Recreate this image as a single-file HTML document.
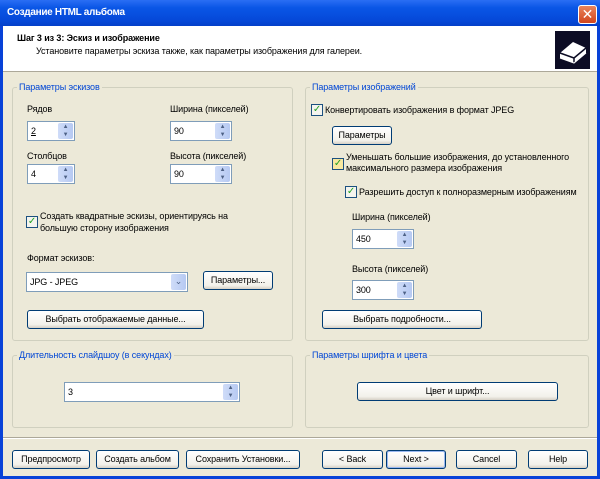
<!DOCTYPE html>
<html><head><meta charset="utf-8"><style>
*{margin:0;padding:0;box-sizing:border-box}
body{width:600px;height:479px;overflow:hidden;background:#0842d8;font-family:"Liberation Sans","DejaVu Sans",sans-serif;font-size:9px;letter-spacing:-0.1px;color:#000;position:relative}
.a{position:absolute}
#title{left:0;top:0;width:600px;height:26px;background:linear-gradient(#2a6ef4,#0a56e6 30%,#0548d8 80%,#0440c8);}
#title span{position:absolute;left:7px;top:7px;color:#fff;font-weight:bold;font-size:10px;letter-spacing:-0.3px}
#close{left:578px;top:5px;width:19px;height:19px;border:1px solid #fff;border-radius:3px;background:linear-gradient(#e8845c,#d2461e);color:#fff;font-weight:bold;font-size:14px;text-align:center;line-height:16px}
#client{left:3px;top:26px;width:594px;height:450px;background:#ece9d8}
#head{left:3px;top:26px;width:594px;height:46px;background:#fff;border-bottom:1px solid #aca899}
.grp{position:absolute;border:1px solid #d0d0bf;border-radius:3px}
.gl{position:absolute;background:#ece9d8;color:#0046d5;padding:0 2px;top:-6px;left:4px;white-space:nowrap}
.t{position:absolute;white-space:nowrap}
.spin{position:absolute;height:20px;background:#fff;border:1px solid #7f9db9}
.spin span{position:absolute;left:3px;top:4px}
.sb{position:absolute;right:1px;top:1px;width:15px;height:16px;background:linear-gradient(90deg,#cfdcf8,#b6c9f2);border-radius:2px;font-size:6px;color:#4d6185;text-align:center;line-height:8px}
.btn{position:absolute;height:19px;border:1px solid #003c74;border-radius:3px;background:linear-gradient(#fff,#f2f1ea 80%,#d6d0c5);text-align:center;line-height:17px;white-space:nowrap}
.cb{position:absolute;width:12px;height:12px;border:1px solid #1c5180;background:#f4f4ee;color:#21a121;font-size:10px;line-height:10px;text-align:center;font-weight:bold}
</style></head><body>
<div class="a" id="title"><span>Создание HTML альбома</span></div>
<div class="a" id="close">✕</div>
<div class="a" id="client"></div>
<div class="a" id="head"></div>
<div class="t" style="left:17px;top:33px;font-weight:bold">Шаг 3 из 3: Эскиз и изображение</div>
<div class="t" style="left:36px;top:46px">Установите параметры эскиза также, как параметры изображения для галереи.</div>
<div class="a" style="left:555px;top:31px;width:35px;height:38px;background:#0c0c24">
<svg width="35" height="38" viewBox="0 0 35 38"><path d="M5 22 L18 11 L31 17 L31 22 L19 32 L5 27 Z" fill="#fff"/><path d="M5 22 L19 27 L31 17 M19 27 L19 32" stroke="#0c0c24" stroke-width="1.5" fill="none"/><path d="M5 27 L19 32 L31 22" stroke="#fff" stroke-width="1" fill="none"/></svg></div>

<div class="grp" style="left:12px;top:87px;width:281px;height:254px"><div class="gl">Параметры эскизов</div></div>
<div class="t" style="left:27px;top:104px">Рядов</div>
<div class="spin" style="left:27px;top:121px;width:48px"><span style="text-decoration:underline">2</span><div class="sb">▲<br>▼</div></div>
<div class="t" style="left:170px;top:104px">Ширина (пикселей)</div>
<div class="spin" style="left:170px;top:121px;width:62px"><span>90</span><div class="sb">▲<br>▼</div></div>
<div class="t" style="left:27px;top:151px">Столбцов</div>
<div class="spin" style="left:27px;top:164px;width:48px"><span>4</span><div class="sb">▲<br>▼</div></div>
<div class="t" style="left:170px;top:151px">Высота (пикселей)</div>
<div class="spin" style="left:170px;top:164px;width:62px"><span>90</span><div class="sb">▲<br>▼</div></div>
<div class="cb" style="left:26px;top:216px">✓</div>
<div class="t" style="left:40px;top:210px;line-height:12px">Создать квадратные эскизы, ориентируясь на<br>большую сторону изображения</div>
<div class="t" style="left:27px;top:253px">Формат эскизов:</div>
<div class="spin" style="left:26px;top:272px;width:162px"><span>JPG - JPEG</span><div class="sb" style="line-height:14px;font-size:9px">⌄</div></div>
<div class="btn" style="left:203px;top:271px;width:70px">Параметры...</div>
<div class="btn" style="left:27px;top:310px;width:177px">Выбрать отображаемые данные...</div>

<div class="grp" style="left:12px;top:355px;width:281px;height:73px"><div class="gl">Длительность слайдшоу (в секундах)</div></div>
<div class="spin" style="left:64px;top:382px;width:176px"><span>3</span><div class="sb">▲<br>▼</div></div>

<div class="grp" style="left:305px;top:87px;width:284px;height:254px"><div class="gl">Параметры изображений</div></div>
<div class="cb" style="left:311px;top:104px">✓</div>
<div class="t" style="left:325px;top:105px">Конвертировать изображения в формат JPEG</div>
<div class="btn" style="left:332px;top:126px;width:60px">Параметры</div>
<div class="cb" style="left:332px;top:158px;background:#f8e8a0">✓</div>
<div class="t" style="left:346px;top:152px;line-height:11px">Уменьшать большие изображения, до установленного<br>максимального размера изображения</div>
<div class="cb" style="left:345px;top:186px">✓</div>
<div class="t" style="left:359px;top:187px">Разрешить доступ к полноразмерным изображениям</div>
<div class="t" style="left:352px;top:212px">Ширина (пикселей)</div>
<div class="spin" style="left:352px;top:229px;width:62px"><span>450</span><div class="sb">▲<br>▼</div></div>
<div class="t" style="left:352px;top:264px">Высота (пикселей)</div>
<div class="spin" style="left:352px;top:280px;width:62px"><span>300</span><div class="sb">▲<br>▼</div></div>
<div class="btn" style="left:322px;top:310px;width:160px">Выбрать подробности...</div>

<div class="grp" style="left:305px;top:355px;width:284px;height:73px"><div class="gl">Параметры шрифта и цвета</div></div>
<div class="btn" style="left:357px;top:382px;width:201px">Цвет и шрифт...</div>

<div class="a" style="left:3px;top:437px;width:594px;height:2px;border-top:1px solid #aca899;border-bottom:1px solid #fff"></div>
<div class="btn" style="left:12px;top:450px;width:78px">Предпросмотр</div>
<div class="btn" style="left:96px;top:450px;width:83px">Создать альбом</div>
<div class="btn" style="left:186px;top:450px;width:114px">Сохранить Установки...</div>
<div class="btn" style="left:322px;top:450px;width:61px">&lt; Back</div>
<div class="btn" style="left:386px;top:450px;width:60px;box-shadow:inset 0 0 0 1px #9ab8f0">Next &gt;</div>
<div class="btn" style="left:456px;top:450px;width:61px">Cancel</div>
<div class="btn" style="left:528px;top:450px;width:60px">Help</div>
</body></html>
